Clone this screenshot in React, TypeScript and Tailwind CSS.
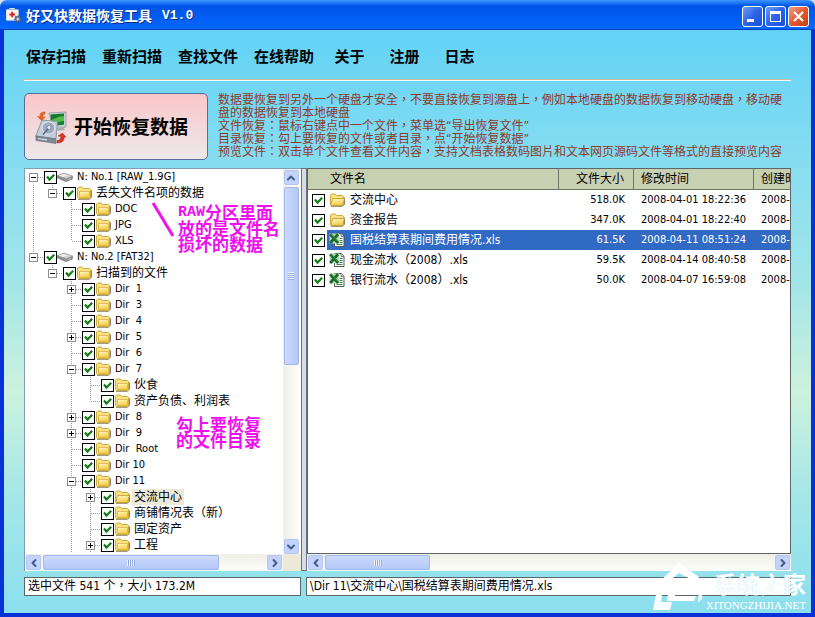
import { ChevronDown, ChevronLeft, ChevronRight, ChevronUp } from "lucide-react";
import clsx from "clsx";

type TreeRow = {
  // one character per 19px guide column, see Guide
  guides: string;
  icon: "disk" | "folder" | "open";
  label: string;
  selected?: boolean;
};

const menu = ["保存扫描", "重新扫描", "查找文件", "在线帮助", "关于", "注册", "日志"];

const notes = [
  "数据要恢复到另外一个硬盘才安全，不要直接恢复到源盘上，例如本地硬盘的数据恢复到移动硬盘，移动硬盘的数据恢复到本地硬盘",
  "文件恢复：鼠标右键点中一个文件，菜单选“导出恢复文件”",
  "目录恢复：勾上要恢复的文件或者目录，点“开始恢复数据”",
  "预览文件：双击单个文件查看文件内容，支持文档表格数码图片和文本网页源码文件等格式的直接预览内容",
];

const tree: TreeRow[] = [
  { guides: "F", icon: "disk", label: "N: No.1 [RAW_1.9G]" },
  { guides: "|E", icon: "folder", label: "丢失文件名项的数据" },
  { guides: "| t", icon: "folder", label: "DOC" },
  { guides: "| t", icon: "folder", label: "JPG" },
  { guides: "| l", icon: "folder", label: "XLS" },
  { guides: "E", icon: "disk", label: "N: No.2 [FAT32]" },
  { guides: " E", icon: "folder", label: "扫描到的文件" },
  { guides: "  +", icon: "folder", label: "Dir  1" },
  { guides: "  t", icon: "folder", label: "Dir  3" },
  { guides: "  t", icon: "folder", label: "Dir  4" },
  { guides: "  +", icon: "folder", label: "Dir  5" },
  { guides: "  t", icon: "folder", label: "Dir  6" },
  { guides: "  -", icon: "folder", label: "Dir  7" },
  { guides: "  |t", icon: "folder", label: "伙食" },
  { guides: "  |l", icon: "folder", label: "资产负债、利润表" },
  { guides: "  +", icon: "folder", label: "Dir  8" },
  { guides: "  +", icon: "folder", label: "Dir  9" },
  { guides: "  t", icon: "folder", label: "Dir  Root" },
  { guides: "  t", icon: "folder", label: "Dir 10" },
  { guides: "  -", icon: "folder", label: "Dir 11" },
  { guides: "  |+", icon: "open", label: "交流中心", selected: true },
  { guides: "  |t", icon: "folder", label: "商铺情况表（新）" },
  { guides: "  |t", icon: "folder", label: "固定资产" },
  { guides: "  |+", icon: "folder", label: "工程" },
];

const files = [
  { name: "交流中心", size: "518.0K", time: "2008-04-01 18:22:36", dir: true },
  { name: "资金报告", size: "347.0K", time: "2008-04-01 18:22:40", dir: true },
  { name: "国税结算表期间费用情况.xls", size: "61.5K", time: "2008-04-11 08:51:24", selected: true },
  { name: "现金流水（2008）.xls", size: "59.5K", time: "2008-04-14 08:40:58" },
  { name: "银行流水（2008）.xls", size: "50.0K", time: "2008-04-07 16:59:08" },
];

// the TC face centres full-width commas and colons in their cell
const centredPunctuation = "font-['DejaVu_Sans_Condensed','Open_Sans','Noto_Sans_CJK_TC',sans-serif]";

function Guide({ kind }: { kind: string }) {
  const up = "|tl+-E".includes(kind);
  const down = "|t+-".includes(kind);
  const box = "+-EF".includes(kind);
  const arm = box || "tl".includes(kind);
  return (
    <svg width="19" height="16" className="shrink-0" shapeRendering="crispEdges" fill="none">
      <g stroke="#9a9a9a" strokeDasharray="1 1">
        {up && <path d="M8.5 0V8" />}
        {down && <path d="M8.5 8V16" />}
        {arm && <path d="M9 8.5H19" />}
      </g>
      {box && (
        <>
          <rect x="4.5" y="4.5" width="8" height="8" fill="#fff" stroke="#8f8f8f" />
          <path d={kind === "+" ? "M6 8.5h5M8.5 6v5" : "M6 8.5h5"} stroke="#000" />
        </>
      )}
    </svg>
  );
}

function Tick({ label }: { label: string }) {
  return (
    <span className="grid size-[13px] shrink-0">
      <input
        type="checkbox"
        defaultChecked
        aria-label={label}
        className="peer [grid-area:1/1] size-[13px] appearance-none border border-black bg-white"
      />
      <svg viewBox="0 0 13 13" className="pointer-events-none invisible [grid-area:1/1] size-[13px] peer-checked:visible">
        <path d="M3 5.5 5.5 8.5 10.2 3.8" fill="none" stroke="#118011" strokeWidth="2.2" />
      </svg>
    </span>
  );
}

function Folder({ open }: { open?: boolean }) {
  return (
    <svg viewBox="0 0 16 16" className="size-4 shrink-0">
      <defs>
        <linearGradient id="folder" x1="0" y1="0" x2="0.4" y2="1">
          <stop offset="0" stopColor="#fffbc8" />
          <stop offset="1" stopColor="#f5cc4c" />
        </linearGradient>
      </defs>
      <path d="M2 14.3h11.5l2-2V5.5" fill="none" stroke="#8a8266" strokeWidth="1" />
      <path d="M1.5 3.2 2.6 2h3.6l1.2 1.5h6.1l1 1v8l-1 1h-11l-1-1z" fill="#f8e284" stroke="#c9a02c" strokeWidth=".9" />
      {open ? (
        <path d="M3.6 6.5h11.9l-2 7H1.7z" fill="url(#folder)" stroke="#c49a26" strokeWidth="0.8" />
      ) : (
        <path d="M3.5 6.5h10v6h-10z" fill="url(#folder)" stroke="#dcb040" strokeWidth="0.8" />
      )}
    </svg>
  );
}

function Disk() {
  return (
    <svg viewBox="0 0 16 16" className="size-4 shrink-0">
      <path d="M.5 6.5 7 4.2 15.5 7v3L9 12.8.5 9z" fill="#8c8c8c" stroke="#777" strokeWidth=".6" />
      <path d="M.8 6.6 7 4.4 15.2 7 9 9.6z" fill="#d2d2d2" />
      <path d="M2 6.6 7 5l4 1.2-5 1.8z" fill="#ececec" />
      <path d="M9 9.7v3" stroke="#bbb" strokeWidth=".7" />
      <path d="M11.5 10.4 13.4 9.6" stroke="#e6e6e6" />
    </svg>
  );
}

function ExcelIcon() {
  return (
    <svg viewBox="0 0 16 16" className="size-4 shrink-0">
      <path d="M5.5 1.5h6.800L15 4.200v10.300H5.500z" fill="#fff" stroke="#555" />
      <path d="M12 1.500v3h3" fill="#ddd" stroke="#555" strokeWidth=".7" />
      <path d="M10.500 6.500h3M10.500 8.500h3M10.500 10.500h3M7.500 12.500h6" stroke="#2c7a3c" strokeWidth=".9" />
      <path d="M.5 1.500h9.700v10H.5z" fill="#b9dab8" />
      <path d="M1.200 2.200 9.200 11M9 2.200 1.200 11" stroke="#176b2a" strokeWidth="2.800" />
      <path d="M2.200 2 9 9.600" stroke="#5fac66" strokeWidth=".8" />
    </svg>
  );
}

function AppIcon() {
  return (
    <svg viewBox="0 0 16 16" className="size-4">
      <path d="M3.5 1.5V.5h5v1" fill="none" stroke="#ddd" />
      <rect x="0" y="1.5" width="12.5" height="11" rx="1" fill="#f4f4f4" stroke="#aebccc" strokeWidth=".6" />
      <path d="M6.2 3.8v5.4M3.5 6.5h5.4" stroke="#dd1c1c" strokeWidth="1.8" />
      <circle cx="11.8" cy="11" r="2.9" fill="#7788a3" stroke="#405575" strokeWidth="1.4" strokeDasharray="1.6 1" />
      <circle cx="11.8" cy="11" r="1.1" fill="#d8e2ef" />
    </svg>
  );
}

function RestoreIcon() {
  return (
    <svg viewBox="0 0 32 34" className="h-[34px] w-8 shrink-0">
      <path d="M14 2 31 1v15l-13 2z" fill="#c6ccd0" stroke="#8c9498" strokeWidth=".7" />
      <path d="M15.500 3.500 29 2.600v10.800l-13 1.800z" fill="#167a2c" />
      <path d="M16 9c4-1 7-4 13-4v5c-4 0-8 3-13 3z" fill="#56ba4a" />
      <path d="m22 17 6-1 2 3-7 1z" fill="#a9afb4" />
      <path d="M7 9 22.500 10.500 21 28 .8 25z" fill="#c3ccd7" stroke="#7d8896" strokeWidth=".8" />
      <ellipse cx="13.500" cy="17" rx="6.500" ry="6.200" fill="#9cabc0" stroke="#eef2f6" strokeWidth=".9" />
      <circle cx="14" cy="16.500" r="2" fill="#e8edf3" stroke="#66748a" strokeWidth=".6" />
      <path d="m13 18-5 5.500" stroke="#50607a" strokeWidth="1.300" />
      <path d="M.8 25 21 28v4.500L1.200 29.500z" fill="#7f8995" stroke="#5f6873" strokeWidth=".6" />
      <path d="m3 27.500 9 1.400" stroke="#dfe5ea" strokeWidth="1.200" />
      <path d="M10 1C5 1 4.500 3.500 5 6L2.500 5.500 6.500 9.500l4-3.500-2.500.2C7.500 4 8.500 3 10 3z" fill="#e2682a" stroke="#c2501c" strokeWidth=".5" />
      <path d="M22 32c6 0 7.500-3 7-6l2 .3-3.500-4.300-4.500 3 2.700.4c0 2.600-1.200 4-3.700 4z" fill="#cf3a2a" stroke="#a92a20" strokeWidth=".5" />
    </svg>
  );
}

const scrollBtn =
  "flex size-[15px] shrink-0 items-center justify-center rounded-[2px] border border-[#b4c6f0] bg-[#c3d3fb] text-[#435c8c]";

function HScroll({ thumb }: { thumb: string }) {
  return (
    <div className="flex h-[17px] flex-1 items-center gap-[2px] bg-linear-to-b from-[#f0efe6] to-[#fdfdfa] px-px">
      <button aria-label="向左滚动" className={scrollBtn}>
        <ChevronLeft className="size-3" strokeWidth={4} />
      </button>
      <div
        className={clsx(
          "flex h-[15px] items-center justify-center rounded-[2px] border border-[#a3b8e8] bg-linear-to-b from-[#cbdafd] to-[#b4c8f8]",
          thumb,
        )}
      >
        <span className="h-[6px] w-2 bg-[repeating-linear-gradient(90deg,#eef4fe_0_1px,#94abe0_1px_2px)]" />
      </div>
      <button aria-label="向右滚动" className={clsx(scrollBtn, "ml-auto")}>
        <ChevronRight className="size-3" strokeWidth={4} />
      </button>
    </div>
  );
}

function TitleBar() {
  const btn = "flex size-[21px] items-center justify-center rounded-[3px] border border-white";
  const blue = "bg-linear-to-br from-[#6f9cf8] via-[#2c63e6] to-[#1a50d8]";
  return (
    <header className="flex h-[30px] shrink-0 items-center gap-1 rounded-t-[7px] bg-linear-to-b from-[#3c95ff] from-0% via-[#0053e6] via-20% to-[#0568ff] to-95% px-[6px] pt-[2px] shadow-[inset_0_-1px_0_#0040c8]">
      <AppIcon />
      <h1 className="flex flex-1 items-center gap-[10px] text-[14px] leading-4 font-bold text-white [text-shadow:1px_1px_0_#0b2a86]">
        好又快数据恢复工具
        <span className="font-['Liberation_Mono'] text-[13px]">V1.0</span>
      </h1>
      <div className="flex gap-[2px]">
        <button aria-label="最小化" className={clsx(btn, blue)}>
          <svg viewBox="0 0 19 19" className="size-[19px]">
            <path d="M4 13.5h7" stroke="#fff" strokeWidth="3" />
          </svg>
        </button>
        <button aria-label="最大化" className={clsx(btn, blue)}>
          <svg viewBox="0 0 19 19" className="size-[19px]" shapeRendering="crispEdges">
            <path d="M4.5 5v9.5h10V5" fill="none" stroke="#fff" />
            <path d="M4 5.5h11" stroke="#fff" strokeWidth="3" />
          </svg>
        </button>
        <button
          aria-label="关闭"
          className={clsx(btn, "bg-linear-to-br from-[#f0a088] via-[#e2582f] to-[#c83c14]")}
        >
          <svg viewBox="0 0 19 19" className="size-[19px]">
            <path d="m5 5 9 9m0-9-9 9" stroke="#fff" strokeWidth="2.2" />
          </svg>
        </button>
      </div>
    </header>
  );
}

function TreePanel() {
  return (
    <section className="relative flex w-[277px] shrink-0 flex-col border-t border-l border-[#7f9db9] bg-white">
      <div className="flex flex-1">
        <ul className="min-w-0 flex-1 text-[11px] leading-4">
          {tree.map((row) => (
            <li key={row.label} className="flex h-4 items-center">
              {row.guides.split("").map((kind, i) => (
                <Guide key={i} kind={kind} />
              ))}
              <Tick label={row.label} />
              {row.icon === "disk" ? <Disk /> : <Folder open={row.icon === "open"} />}
              <span
                className={clsx(
                  "ml-[2px] h-4 px-[2px] whitespace-pre",
                  row.selected && "bg-[#ece9d8]",
                  row.label.charCodeAt(0) > 255 && "text-[12px]",
                )}
              >
                {row.label}
              </span>
            </li>
          ))}
        </ul>
        <div className="mr-[2px] flex w-4 flex-col items-center gap-[2px] bg-linear-to-r from-[#f0efe6] to-[#fdfdfa] pt-px">
          <button aria-label="向上滚动" className={scrollBtn}>
            <ChevronUp className="size-3" strokeWidth={4} />
          </button>
          <div className="flex h-[178px] w-[15px] items-center justify-center rounded-[2px] border border-[#a3b8e8] bg-linear-to-r from-[#cbdafd] to-[#b4c8f8]">
            <span className="h-2 w-[6px] bg-[repeating-linear-gradient(180deg,#eef4fe_0_1px,#94abe0_1px_2px)]" />
          </div>
          <button aria-label="向下滚动" className={clsx(scrollBtn, "mt-auto")}>
            <ChevronDown className="size-3" strokeWidth={4} />
          </button>
        </div>
      </div>
      <div className="flex">
        <HScroll thumb="w-[176px]" />
        <div className="w-[18px] bg-[#ece9d8]" />
      </div>

      {/* callouts drawn over the tree */}
      <svg className="absolute top-8 left-[125px] h-10 w-7" fill="none">
        <path d="M3 2 23 35" stroke="#ee11ee" strokeWidth="3" />
      </svg>
      <div className="absolute top-9 left-[153px] text-[17px] leading-4 font-bold whitespace-nowrap text-[#ee11ee]">
        <p className="flex h-4 items-center">
          <span className="font-['Liberation_Mono'] text-[15px]">RAW</span>分区里面
        </p>
        <p className="h-4">放的是文件名</p>
        <p className="h-4">损坏的数据</p>
      </div>
      <div className="absolute top-[248px] left-[151px] text-[17px] leading-4 font-bold whitespace-nowrap text-[#ee11ee]">
        <p className="h-4">勾上要恢复</p>
        <p className="h-4">的文件目录</p>
      </div>
    </section>
  );
}

function FilePanel() {
  const th = "h-5 border-r border-b border-[#6f7560] bg-[#c8d0b2] p-0 text-[12px] font-normal";
  return (
    <section className="flex min-w-0 flex-1 flex-col">
      <div className="flex-1 overflow-hidden border border-[#5c6668] bg-white">
        <table className="w-[600px] table-fixed border-separate border-spacing-0 text-[11px] leading-5">
          <colgroup>
            <col className="w-[19px]" />
            <col className="w-[232px]" />
            <col className="w-[75px]" />
            <col className="w-[120px]" />
            <col />
          </colgroup>
          <thead>
            <tr>
              <th colSpan={2} className={clsx(th, "pl-[22px] text-left")}>文件名</th>
              <th className={clsx(th, "pr-[9px] text-right")}>文件大小</th>
              <th className={clsx(th, "pl-[7px] text-left")}>修改时间</th>
              <th className={clsx(th, "pl-[7px] text-left")}>创建时间</th>
            </tr>
          </thead>
          <tbody>
            {files.map((f) => (
              <tr key={f.name} className={clsx("h-5", f.selected && "[&>td+td]:bg-[#316ac5] [&>td+td]:text-white")}>
                <td className="p-0 pl-1">
                  <Tick label={f.name} />
                </td>
                <td className="p-0 pl-[2px]">
                  <div className="flex h-5 items-center gap-[5px] text-[12px]">
                    {f.dir ? <Folder open /> : <ExcelIcon />}
                    {f.name}
                  </div>
                </td>
                <td className="p-0 pr-[9px] text-right">{f.size}</td>
                <td className="p-0 pl-[7px] whitespace-nowrap">{f.time}</td>
                <td className="p-0 pl-[7px] whitespace-nowrap">{f.time}</td>
              </tr>
            ))}
          </tbody>
        </table>
      </div>
      <div className="flex">
        <HScroll thumb="w-[105px]" />
      </div>
    </section>
  );
}

function Watermark() {
  return (
    <div className="pointer-events-none absolute right-[9px] bottom-[6px] flex items-end text-white">
      <svg viewBox="0 0 66 48" className="h-12 w-[66px]" fill="#fff">
        <path d="M0 25 16 22 39 0l20 14-3 5-17-9-15 12-3 17h11l-2 8H13l4-21z" />
        <path d="M29 23h27v5H36l-1 5h21l-2 5H27z" />
        <path d="m59 19 5-3-2 20-4 4z" opacity=".8" />
      </svg>
      <div className="flex flex-col items-end [text-shadow:0_0_1px_#9adfe8]">
        <span className="text-[23px] leading-7 font-bold">系统之家</span>
        <span className="font-['Liberation_Serif'] text-[11px] leading-3">XITONGZHIJIA.NET</span>
      </div>
    </div>
  );
}

export default function App() {
  const status = clsx(
    "h-[19px] overflow-hidden border border-[#5c6668] bg-white px-[3px] text-[12px] leading-[17px] whitespace-nowrap",
    centredPunctuation,
  );
  return (
    <div className="relative flex min-h-screen flex-col bg-[#d8dce4] font-['DejaVu_Sans_Condensed','Open_Sans','Noto_Sans_CJK_SC',sans-serif] text-black">
      <TitleBar />
      <main className="flex flex-1 flex-col border-x-4 border-b-4 border-[#0831d9] bg-[linear-gradient(180deg,#62d2f6_0%,#8adef0_25%,#9fe5e9_42%,#cdf2dd_62%,#a4e7e8_80%,#8cdfee_100%)] px-5 pb-[17px]">
        <nav className="flex gap-4 border-b border-white pt-[15px] pb-[11px] text-[15px] leading-6 font-bold shadow-[0_-1px_0_#c9b9a4_inset]">
          {menu.map((item, i) => (
            <button key={item} className={clsx("min-w-[39px]", i === 0 && "ml-[2px]")}>
              {item}
            </button>
          ))}
        </nav>

        <div className="flex gap-[10px] pt-3 pb-2">
          <button className="flex h-[67px] w-[184px] shrink-0 items-center gap-[7px] rounded-[5px] border border-[#5c6aa0] bg-linear-to-b from-[#fac6c8] to-[#ebe9ea] pt-[2px] pl-[10px] text-[19px] font-bold">
            <RestoreIcon />
            开始恢复数据
          </button>
          <div className={clsx("pt-px text-[12px] leading-[13px] text-[#8c3a2c]", centredPunctuation)}>
            {notes.map((note) => (
              <p key={note}>{note}</p>
            ))}
          </div>
        </div>

        <div className="flex flex-1">
          <TreePanel />
          <div className="w-[6px] shrink-0 cursor-col-resize border border-[#6a7478] bg-[#d5dde8]" />
          <FilePanel />
        </div>

        <footer className="flex gap-[5px] pt-[6px]">
          <div className={clsx(status, "w-[277px] shrink-0")}>选中文件 541 个，大小 173.2M</div>
          <div className={clsx(status, "flex-1")}>\Dir 11\交流中心\国税结算表期间费用情况.xls</div>
        </footer>
      </main>
      <Watermark />
    </div>
  );
}
